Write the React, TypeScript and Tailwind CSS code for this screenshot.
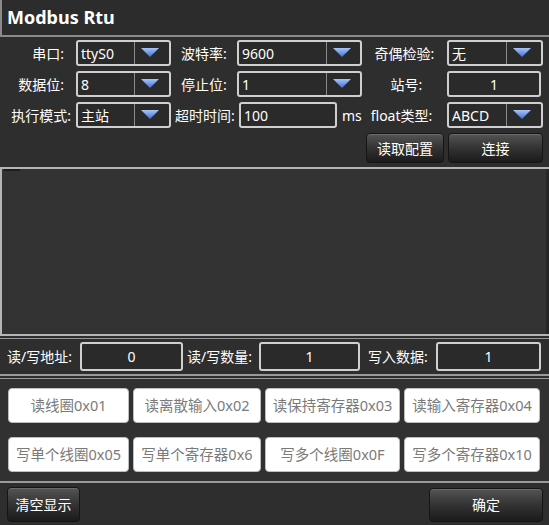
import React from "react"

const font = { fontFamily: '"Noto Sans", "Noto Sans CJK SC", sans-serif' }

function Arrow() {
  return (
    <svg width="18" height="9" viewBox="0 0 18 9" aria-hidden>
      <defs>
        <linearGradient id="arrowFill" x1="0" y1="0" x2="0" y2="1">
          <stop offset="0" stopColor="#a9c4f5" />
          <stop offset="1" stopColor="#3b6ede" />
        </linearGradient>
      </defs>
      <polygon points="0,0 18,0 9,9" fill="url(#arrowFill)" />
    </svg>
  )
}

function Combo({ value, width, split }: { value: string; width: string; split: string }) {
  return (
    <div className={`flex h-[26px] ${width} overflow-hidden rounded-[3px] border-2 border-[#cfcfcf] bg-[#2a2a2a]`}>
      <div className={`flex ${split} items-center border-r border-[#8a8a8a] pl-[3px] text-[14px] text-white`}>{value}</div>
      <div className="flex flex-1 items-start justify-center pr-[4px] pt-[6px]">
        <Arrow />
      </div>
    </div>
  )
}

function Field({ value, width, center }: { value: string; width: string; center?: boolean }) {
  return (
    <div
      className={`flex h-[26px] ${width} items-center rounded-[3px] border-2 border-[#cfcfcf] bg-[#2a2a2a] text-[14px] text-white ${center ? "justify-center" : "pl-[3px]"}`}
    >
      {value}
    </div>
  )
}

function DarkButton({ label, width, height }: { label: string; width: string; height: string }) {
  return (
    <button
      type="button"
      className={`${width} ${height} rounded-[4px] border border-[#151515] bg-gradient-to-b from-[#555555] via-[#333333] to-[#1b1b1b] text-[14px] text-white shadow-[inset_0_1px_0_#6a6a6a]`}
    >
      {label}
    </button>
  )
}

function FuncButton({ label, width }: { label: string; width: string }) {
  return (
    <button
      type="button"
      className={`${width} h-[35px] rounded-[4px] border border-[#bdbdbd] bg-white text-[14.5px] text-[#7a7a7a]`}
    >
      {label}
    </button>
  )
}

export default function App() {
  return (
    <div className="flex h-[525px] w-[549px] flex-col overflow-hidden bg-[#2e2e2e] text-white" style={font}>
      {/* title */}
      <div className="flex h-[37px] shrink-0 items-center border-b-2 border-l-2 border-[#8a8a8a] bg-[#2c2c2c] pl-[5px] text-[18px] font-bold">
        Modbus Rtu
      </div>

      {/* serial config */}
      <div className="flex h-[129px] shrink-0 flex-col gap-[5px] pt-[3px] text-[14px]">
        <div className="flex h-[26px] items-center">
          <div className="w-[76px] pr-[12px] text-right">串口:</div>
          <Combo value="ttyS0" width="w-[95px]" split="w-[57px]" />
          <div className="w-[66px] text-center">波特率:</div>
          <Combo value="9600" width="w-[125px]" split="w-[88px]" />
          <div className="w-[85px] text-center">奇偶检验:</div>
          <Combo value="无" width="w-[96px]" split="w-[58px]" />
        </div>
        <div className="flex h-[26px] items-center">
          <div className="w-[76px] pr-[12px] text-right">数据位:</div>
          <Combo value="8" width="w-[95px]" split="w-[57px]" />
          <div className="w-[66px] text-center">停止位:</div>
          <Combo value="1" width="w-[125px]" split="w-[88px]" />
          <div className="w-[85px] pl-[4px] text-center">站号:</div>
          <Field value="1" width="w-[94px]" center />
        </div>
        <div className="flex h-[26px] items-center">
          <div className="w-[76px] pr-[5px] text-right">执行模式:</div>
          <Combo value="主站" width="w-[95px]" split="w-[57px]" />
          <div className="w-[68px] text-center">超时时间:</div>
          <Field value="100" width="w-[98px]" />
          <div className="w-[25px] pl-[5px]">ms</div>
          <div className="w-[85px] pr-[6px] text-center">float类型:</div>
          <Combo value="ABCD" width="w-[96px]" split="w-[58px]" />
        </div>
        <div className="flex h-[30px] justify-end gap-[4px] pr-[6px]">
          <DarkButton label="读取配置" width="w-[78px]" height="h-[30px]" />
          <DarkButton label="连接" width="w-[95px]" height="h-[30px]" />
        </div>
      </div>

      {/* output area */}
      <div className="relative mt-[1px] h-[169px] shrink-0 border-t-2 border-b-2 border-l-2 border-[#b5b5b5] bg-[#333333]">
        <div className="absolute left-[2px] top-0 h-[2px] w-[16px] bg-[#1c1c1c]" />
        <div className="absolute right-0 top-0 h-full w-[3px] bg-[#262626]" />
      </div>

      {/* address row */}
      <div className="mt-[2px] flex h-[38px] shrink-0 items-center border-t border-b-2 border-[#9a9a9a] text-[14px]">
        <div className="w-[80px] pl-[7px]">读/写地址:</div>
        <Field value="0" width="w-[103px] !h-[29px]" center />
        <div className="w-[76px] pl-[4px]">读/写数量:</div>
        <Field value="1" width="w-[101px] !h-[29px]" center />
        <div className="w-[76px] pl-[8px]">写入数据:</div>
        <Field value="1" width="w-[105px] !h-[29px]" center />
      </div>

      {/* function codes */}
      <div className="mt-[2px] flex h-[105px] shrink-0 flex-col gap-[14px] border-t border-b-2 border-[#9a9a9a] bg-[#313131] pl-[8px] pt-[9px]">
        <div className="flex gap-[4px]">
          <FuncButton label="读线圈0x01" width="w-[121px]" />
          <FuncButton label="读离散输入0x02" width="w-[128px]" />
          <FuncButton label="读保持寄存器0x03" width="w-[135px]" />
          <FuncButton label="读输入寄存器0x04" width="w-[136px]" />
        </div>
        <div className="flex gap-[4px]">
          <FuncButton label="写单个线圈0x05" width="w-[121px]" />
          <FuncButton label="写单个寄存器0x6" width="w-[128px]" />
          <FuncButton label="写多个线圈0x0F" width="w-[135px]" />
          <FuncButton label="写多个寄存器0x10" width="w-[136px]" />
        </div>
      </div>

      {/* bottom bar */}
      <div className="mt-[1px] flex flex-1 items-center justify-between pl-[7px] pr-[6px]">
        <DarkButton label="清空显示" width="w-[73px]" height="h-[35px]" />
        <DarkButton label="确定" width="w-[114px]" height="h-[34px]" />
      </div>
    </div>
  )
}
